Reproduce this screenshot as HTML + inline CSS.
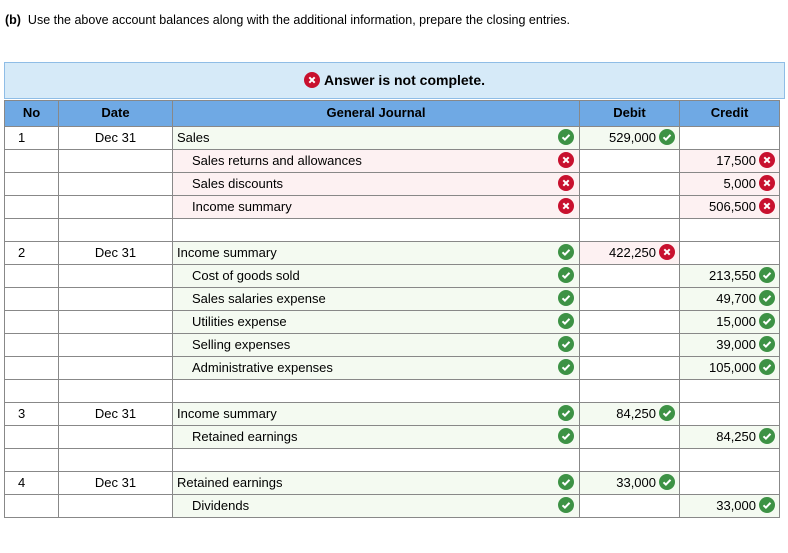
<!DOCTYPE html>
<html><head><meta charset="utf-8"><style>
body{margin:0;width:788px;height:553px;background:#fff;font-family:"Liberation Sans",Arial,sans-serif;font-size:13px;color:#000;position:relative;overflow:hidden}
.q{position:absolute;left:5px;top:13px;font-size:12.5px}
.ban{position:absolute;left:4px;top:62px;width:779px;height:35px;background:#d6eaf8;border:1px solid #8fbde6;text-align:center;line-height:35px;font-weight:bold;font-size:14px}
.ban svg{vertical-align:-3px;margin-right:4px}
table{position:absolute;left:4px;top:100px;border-collapse:collapse;table-layout:fixed}
td,th{border:1px solid #888;height:22px;padding:0 4px 2px 4px;box-sizing:border-box;white-space:nowrap;overflow:hidden}
td{height:23px}
th{background:#6fa9e4;height:26px;font-weight:bold;font-size:13px}
td.no{padding-left:13px}
td.dt{text-align:center}
td.j{position:relative}
td.j .ic{position:absolute;right:5px;top:2px}
td.in{padding-left:19px}
td.num{text-align:right;padding-right:4px}
td.num svg{vertical-align:-3px;margin-left:3px}
.g{background:#f4faf1}.r{background:#fdf1f2}
svg{display:inline-block}
</style></head><body>
<div class="q"><b>(b)</b>&nbsp; Use the above account balances along with the additional information, prepare the closing entries.</div>
<div class="ban"><svg width="16" height="16" viewBox="0 0 16 16"><circle cx="8" cy="8" r="8" fill="#c8102e"/><path d="M5.3 5.3l5.4 5.4M10.7 5.3l-5.4 5.4" stroke="#fff" stroke-width="2"/></svg>Answer is not complete.</div>
<table>
<colgroup><col style="width:54px"><col style="width:114px"><col style="width:407px"><col style="width:100px"><col style="width:100px"></colgroup>
<tr><th>No</th><th>Date</th><th>General Journal</th><th>Debit</th><th>Credit</th></tr>
<tr><td class="no">1</td><td class="dt">Dec 31</td><td class="j g">Sales<span class="ic">C</span></td><td class="num g">529,000C</td><td></td></tr>
<tr><td></td><td></td><td class="j in r">Sales returns and allowances<span class="ic">X</span></td><td></td><td class="num r">17,500X</td></tr>
<tr><td></td><td></td><td class="j in r">Sales discounts<span class="ic">X</span></td><td></td><td class="num r">5,000X</td></tr>
<tr><td></td><td></td><td class="j in r">Income summary<span class="ic">X</span></td><td></td><td class="num r">506,500X</td></tr>
<tr><td></td><td></td><td></td><td></td><td></td></tr>
<tr><td class="no">2</td><td class="dt">Dec 31</td><td class="j g">Income summary<span class="ic">C</span></td><td class="num r">422,250X</td><td></td></tr>
<tr><td></td><td></td><td class="j in g">Cost of goods sold<span class="ic">C</span></td><td></td><td class="num g">213,550C</td></tr>
<tr><td></td><td></td><td class="j in g">Sales salaries expense<span class="ic">C</span></td><td></td><td class="num g">49,700C</td></tr>
<tr><td></td><td></td><td class="j in g">Utilities expense<span class="ic">C</span></td><td></td><td class="num g">15,000C</td></tr>
<tr><td></td><td></td><td class="j in g">Selling expenses<span class="ic">C</span></td><td></td><td class="num g">39,000C</td></tr>
<tr><td></td><td></td><td class="j in g">Administrative expenses<span class="ic">C</span></td><td></td><td class="num g">105,000C</td></tr>
<tr><td></td><td></td><td></td><td></td><td></td></tr>
<tr><td class="no">3</td><td class="dt">Dec 31</td><td class="j g">Income summary<span class="ic">C</span></td><td class="num g">84,250C</td><td></td></tr>
<tr><td></td><td></td><td class="j in g">Retained earnings<span class="ic">C</span></td><td></td><td class="num g">84,250C</td></tr>
<tr><td></td><td></td><td></td><td></td><td></td></tr>
<tr><td class="no">4</td><td class="dt">Dec 31</td><td class="j g">Retained earnings<span class="ic">C</span></td><td class="num g">33,000C</td><td></td></tr>
<tr><td></td><td></td><td class="j in g">Dividends<span class="ic">C</span></td><td></td><td class="num g">33,000C</td></tr>
</table>
<script>
var C='<svg width="16" height="16" viewBox="0 0 16 16"><circle cx="8" cy="8" r="8" fill="#3d9245"/><path d="M4.5 8.3l2.4 2.3 4.6-4.8" stroke="#fff" stroke-width="2" fill="none"/></svg>';
var X='<svg width="16" height="16" viewBox="0 0 16 16"><circle cx="8" cy="8" r="8" fill="#c8102e"/><path d="M5.3 5.3l5.4 5.4M10.7 5.3l-5.4 5.4" stroke="#fff" stroke-width="2"/></svg>';
document.querySelectorAll('.ic').forEach(function(e){e.innerHTML=e.textContent=='C'?C:X;});
document.querySelectorAll('td.num').forEach(function(e){var t=e.textContent;var k=t.slice(-1);e.innerHTML=t.slice(0,-1)+(k=='C'?C:X);});
</script>
</body></html>
